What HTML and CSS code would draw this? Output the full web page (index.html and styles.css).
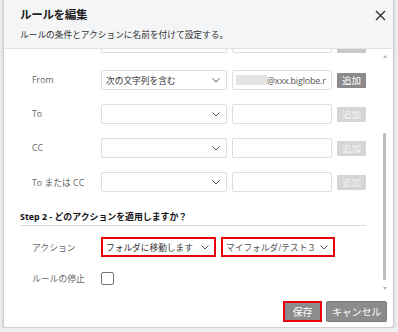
FILE: index.html
```html
<!DOCTYPE html>
<html lang="ja">
  <head>
    <meta charset="UTF-8" />
    <meta name="viewport" content="width=device-width, initial-scale=1.0" />
    <title>ルールを編集</title>
    <link rel="stylesheet" href="styles.css">
  </head>
  <body>
    <div class="dialog">
      <div class="dialog__head">
        <div class="dialog__titles">
          <h1>ルールを編集</h1>
          <p>ルールの条件とアクションに名前を付けて設定する。</p>
        </div>
        <button class="close" aria-label="閉じる">
          <svg width="11" height="11" viewBox="0 0 11 11">
            <path d="M1 1 L10 10 M10 1 L1 10" stroke="#333" stroke-width="1.4" fill="none" />
          </svg>
        </button>
      </div>

      <div class="dialog__body">
        <div class="scroll">
          <div class="cond cond--cut">
            <span class="cond__label"></span>
            <div class="select"></div>
            <div class="field"></div>
            <span class="add add--cut"></span>
          </div>

          <div class="cond">
            <span class="cond__label">From</span>
            <div class="select">
              <span>次の文字列を含む</span>
              <svg class="chev" width="8" height="5" viewBox="0 0 8 5"><path d="M0.5 0.5 L4 4 L7.5 0.5" stroke="#555" fill="none" /></svg>
            </div>
            <div class="field"><span class="blur"></span><span class="field__text">@xxx.biglobe.r</span></div>
            <button class="add add--on">追加</button>
          </div>

          <div class="cond">
            <span class="cond__label">To</span>
            <div class="select">
              <span></span>
              <svg class="chev" width="8" height="5" viewBox="0 0 8 5"><path d="M0.5 0.5 L4 4 L7.5 0.5" stroke="#555" fill="none" /></svg>
            </div>
            <div class="field"></div>
            <button class="add" disabled>追加</button>
          </div>

          <div class="cond">
            <span class="cond__label">CC</span>
            <div class="select">
              <span></span>
              <svg class="chev" width="8" height="5" viewBox="0 0 8 5"><path d="M0.5 0.5 L4 4 L7.5 0.5" stroke="#555" fill="none" /></svg>
            </div>
            <div class="field"></div>
            <button class="add" disabled>追加</button>
          </div>

          <div class="cond">
            <span class="cond__label">To または CC</span>
            <div class="select">
              <span></span>
              <svg class="chev" width="8" height="5" viewBox="0 0 8 5"><path d="M0.5 0.5 L4 4 L7.5 0.5" stroke="#555" fill="none" /></svg>
            </div>
            <div class="field"></div>
            <button class="add" disabled>追加</button>
          </div>

          <h2 class="step">Step 2 - どのアクションを適用しますか？</h2>

          <div class="cond cond--action">
            <span class="cond__label">アクション</span>
            <div class="select select--mark select--act">
              <span>フォルダに移動します</span>
              <svg class="chev" width="8" height="5" viewBox="0 0 8 5"><path d="M0.5 0.5 L4 4 L7.5 0.5" stroke="#555" fill="none" /></svg>
            </div>
            <div class="select select--mark select--folder">
              <span>マイフォルダ/テスト３</span>
              <svg class="chev" width="8" height="5" viewBox="0 0 8 5"><path d="M0.5 0.5 L4 4 L7.5 0.5" stroke="#555" fill="none" /></svg>
            </div>
          </div>

          <div class="cond cond--stop">
            <span class="cond__label">ルールの停止</span>
            <span class="check"></span>
          </div>
        </div>

        <div class="scrollbar">
          <span class="scrollbar__up"></span>
          <span class="scrollbar__thumb"></span>
          <span class="scrollbar__down"></span>
        </div>
      </div>

      <div class="dialog__foot">
        <button class="btn btn--save">保存</button>
        <button class="btn">キャンセル</button>
      </div>
    </div>
  </body>
</html>
```

FILE: styles.css
```css
* {
  margin: 0;
  padding: 0;
  box-sizing: border-box;
}
body {
  background-color: #eeeeee;
  font-family: "Open Sans", "Noto Sans CJK JP", sans-serif;
  color: #333;
  padding: 0 4px 0 3px;
}

.dialog {
  height: 328px;
  background: #fff;
  border: 1px solid #cfcfcf;
  border-top: none;
  border-radius: 0 0 3px 3px;
  box-shadow: 0 1px 3px rgba(0, 0, 0, 0.18);
  display: flex;
  flex-direction: column;
  overflow: hidden;
}

.dialog__head {
  height: 49px;
  flex-shrink: 0;
  background-color: #f4f5f6;
  border-bottom: 1px solid #e3e3e3;
  display: flex;
  justify-content: space-between;
  align-items: flex-start;
  padding: 8px 7px 0 16px;
}
.dialog__titles h1 {
  font-size: 11.5px;
  line-height: 14px;
  font-weight: 700;
  color: #222;
  letter-spacing: -0.3px;
}
.dialog__titles p {
  margin-top: 7px;
  font-size: 8.7px;
  line-height: 12px;
  color: #333;
}
.close {
  background: none;
  border: none;
  width: 11px;
  height: 11px;
  margin-top: 2px;
  display: flex;
}

.dialog__body {
  flex: 1;
  display: flex;
  min-height: 0;
}
.scroll {
  flex: 1;
  overflow: hidden;
  padding: 0 12px 0 16px;
}

.cond {
  display: flex;
  align-items: center;
  height: 20px;
  margin-bottom: 14px;
  padding-left: 12px;
}
.cond--cut {
  margin-top: -16px;
  margin-bottom: 17px;
}
.cond__label {
  width: 69px;
  flex-shrink: 0;
  font-size: 8.8px;
  color: #666;
}

.select {
  width: 126px;
  height: 20px;
  border: 1px solid #dedede;
  border-radius: 2px;
  display: flex;
  align-items: center;
  justify-content: space-between;
  padding: 0 6px 0 4px;
  font-size: 8.7px;
  color: #333;
  white-space: nowrap;
}
.chev {
  flex-shrink: 0;
}
.select--mark {
  border: 2px solid #e8000b;
  border-radius: 0;
  padding: 0 5px 0 3px;
}
.select--act {
  width: 115px;
}
.select--folder {
  width: 114px;
  margin-left: 5px;
  color: #555;
}

.field {
  width: 100px;
  height: 20px;
  margin-left: 5px;
  border: 1px solid #dedede;
  border-radius: 2px;
  display: flex;
  align-items: center;
  padding-left: 3px;
  overflow: hidden;
  white-space: nowrap;
}
.blur {
  width: 31px;
  height: 10px;
  flex-shrink: 0;
  background-color: #e4e4e4;
}
.field__text {
  font-size: 9px;
  color: #555;
  letter-spacing: -0.2px;
}

.add {
  width: 29px;
  height: 15px;
  margin-left: 5px;
  border: none;
  border-radius: 1px;
  font-family: "Noto Sans CJK JP", sans-serif;
  font-size: 9.5px;
  line-height: 15px;
  color: #f4f4f4;
  background-color: #d5d5d5;
}
.add--on {
  background-color: #8b8b8b;
  color: #fff;
}
.add--cut {
  height: 18px;
  align-self: flex-end;
  background-color: #c9c9c9;
}

.step {
  margin: 19px 0 0;
  font-size: 8.9px;
  line-height: 12px;
  font-weight: 700;
  color: #111;
  padding-bottom: 2px;
  border-bottom: 1px solid #dcdcdc;
}

.cond--action {
  margin-top: 11px;
  margin-bottom: 15px;
}
.cond--stop {
  height: 13px;
}
.check {
  width: 13px;
  height: 13px;
  border: 1px solid #777;
  border-radius: 2px;
  background: #fff;
}

.scrollbar {
  width: 15px;
  flex-shrink: 0;
  display: flex;
  flex-direction: column;
  align-items: center;
  padding-right: 2px;
}
.scrollbar__up,
.scrollbar__down {
  width: 0;
  height: 0;
  border-left: 2.5px solid transparent;
  border-right: 2.5px solid transparent;
}
.scrollbar__up {
  margin-top: 6px;
  border-bottom: 3px solid #b5b5b5;
}
.scrollbar__thumb {
  width: 3px;
  height: 147px;
  margin-top: 75px;
  background-color: #bdbdbd;
  border-radius: 1px;
}
.scrollbar__down {
  margin-top: 7px;
  border-top: 3px solid #b5b5b5;
}

.dialog__foot {
  height: 35px;
  flex-shrink: 0;
  display: flex;
  justify-content: flex-end;
  align-items: flex-start;
  gap: 4px;
  padding: 9px 6px 0 0;
}
.btn {
  height: 21px;
  padding: 0;
  font-family: "Noto Sans CJK JP", sans-serif;
  font-size: 10px;
  letter-spacing: -0.2px;
  color: #fff;
  background-color: #8c8c8c;
  border: 1px solid #7a7a7a;
  border-radius: 2px;
  width: 61px;
  white-space: nowrap;
}
.btn--save {
  width: 39px;
  border: 2px solid #e8000b;
  border-radius: 0;
}
```
